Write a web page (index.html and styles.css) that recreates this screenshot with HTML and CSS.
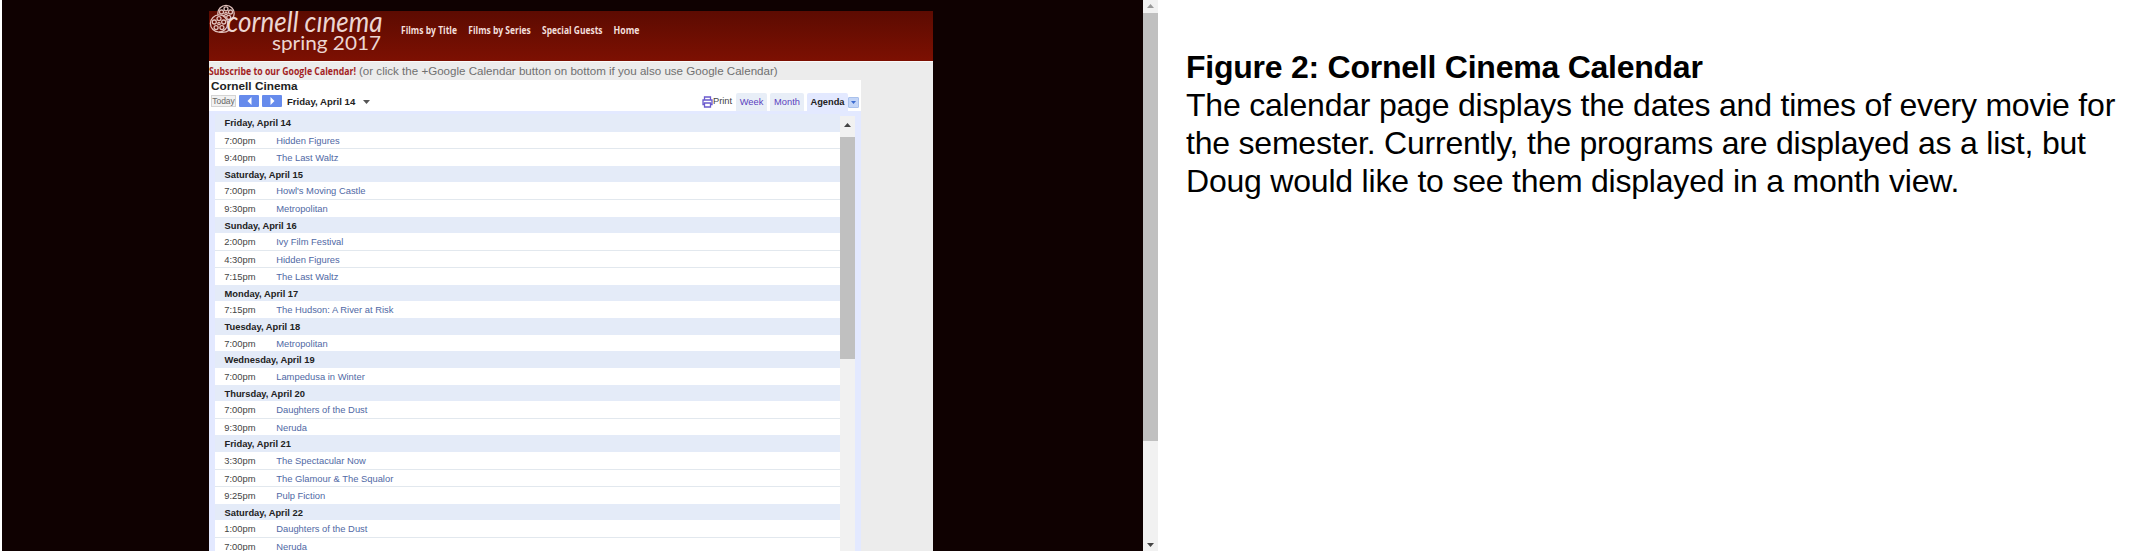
FILE: index.html
```html
<!DOCTYPE html>
<html lang="en">
<head>
<meta charset="utf-8">
<title>Cornell Cinema Calendar</title>
<link rel="stylesheet" href="styles.css">
</head>
<body>
<main class="figure">
  <section class="shot">
    <div class="site">
      <header class="banner">
        <svg class="logo" width="180" height="61" viewBox="0 0 180 61">
          <g fill="none" stroke="#e0bfba" stroke-width="1.300">
            <circle cx="17" cy="13.500" r="8.200"/><circle cx="17" cy="13.500" r="1.200"/>
            <circle cx="17" cy="8.800" r="2"/><circle cx="21.500" cy="12" r="2"/><circle cx="19.700" cy="17.400" r="2"/><circle cx="14.300" cy="17.400" r="2"/><circle cx="12.500" cy="12" r="2"/>
            <circle cx="10" cy="23.500" r="8.600" fill="#650b02"/><circle cx="10" cy="23.500" r="1.200"/>
            <circle cx="10" cy="18.600" r="2"/><circle cx="14.700" cy="22" r="2"/><circle cx="12.900" cy="27.600" r="2"/><circle cx="7.100" cy="27.600" r="2"/><circle cx="5.300" cy="22" r="2"/>
            <path d="M10 32.200q7 1 10-2"/>
          </g>
          <text class="logo-name" x="17.500" y="31.500" textLength="156" lengthAdjust="spacingAndGlyphs">cornell cınema</text>
          <text class="logo-term" x="63" y="50" textLength="109" lengthAdjust="spacingAndGlyphs">spring 2017</text>
        </svg>
        <svg class="nav" width="260" height="61" viewBox="0 0 260 61">
          <text x="12" y="34" textLength="56" lengthAdjust="spacingAndGlyphs">Films by Title</text>
          <text x="79.300" y="34" textLength="62.500" lengthAdjust="spacingAndGlyphs">Films by Series</text>
          <text x="153" y="34" textLength="60.500" lengthAdjust="spacingAndGlyphs">Special Guests</text>
          <text x="224.500" y="34" textLength="26" lengthAdjust="spacingAndGlyphs">Home</text>
        </svg>
      </header>
      <div class="subscribe">
        <svg width="150" height="18" viewBox="0 0 150 18"><text x="0" y="12.500" textLength="147" lengthAdjust="spacingAndGlyphs">Subscribe to our Google Calendar!</text></svg>
        <span>(or click the +Google Calendar button on bottom if you also use Google Calendar)</span>
      </div>
      <div class="calendar">
        <h2 class="cal-title">Cornell Cinema</h2>
        <div class="toolbar">
          <span class="today">Today</span>
          <span class="step"><svg width="5" height="8" viewBox="0 0 5 8"><path d="M4.500 0v8L.5 4z"/></svg></span>
          <span class="step"><svg width="5" height="8" viewBox="0 0 5 8"><path d="M.5 0v8l4-4z"/></svg></span>
          <span class="date">Friday, April 14</span>
          <svg class="caret" width="7" height="4" viewBox="0 0 7 4"><path d="M0 0h7L3.500 4z"/></svg>
          <svg class="printer" width="11" height="12" viewBox="0 0 11 12"><path d="M2.500 4V1h6v3M2.500 8.500H1V4h9v4.500H8.500M2.500 7h6v4h-6z"/></svg>
          <span class="print">Print</span>
          <span class="tab week">Week</span>
          <span class="tab month">Month</span>
          <span class="tab agenda">Agenda</span>
          <span class="menu"><svg width="5" height="3" viewBox="0 0 5 3"><path d="M0 0h5L2.500 3z"/></svg></span>
        </div>
        <div class="frame">
          <div class="list">
            <h3>Friday, April 14</h3>
            <p><time>7:00pm</time><a>Hidden Figures</a></p>
            <p><time>9:40pm</time><a>The Last Waltz</a></p>
            <h3>Saturday, April 15</h3>
            <p><time>7:00pm</time><a>Howl's Moving Castle</a></p>
            <p><time>9:30pm</time><a>Metropolitan</a></p>
            <h3>Sunday, April 16</h3>
            <p><time>2:00pm</time><a>Ivy Film Festival</a></p>
            <p><time>4:30pm</time><a>Hidden Figures</a></p>
            <p><time>7:15pm</time><a>The Last Waltz</a></p>
            <h3>Monday, April 17</h3>
            <p><time>7:15pm</time><a>The Hudson: A River at Risk</a></p>
            <h3>Tuesday, April 18</h3>
            <p><time>7:00pm</time><a>Metropolitan</a></p>
            <h3>Wednesday, April 19</h3>
            <p><time>7:00pm</time><a>Lampedusa in Winter</a></p>
            <h3>Thursday, April 20</h3>
            <p><time>7:00pm</time><a>Daughters of the Dust</a></p>
            <p><time>9:30pm</time><a>Neruda</a></p>
            <h3>Friday, April 21</h3>
            <p><time>3:30pm</time><a>The Spectacular Now</a></p>
            <p><time>7:00pm</time><a>The Glamour &amp; The Squalor</a></p>
            <p><time>9:25pm</time><a>Pulp Fiction</a></p>
            <h3>Saturday, April 22</h3>
            <p><time>1:00pm</time><a>Daughters of the Dust</a></p>
            <p><time>7:00pm</time><a>Neruda</a></p>
          </div>
          <div class="bar inner">
            <svg width="7" height="4" viewBox="0 0 7 4"><path d="M0 4h7L3.500 0z"/></svg>
            <div class="thumb"></div>
          </div>
        </div>
      </div>
    </div>
    <div class="bar outer">
      <svg class="dim" width="7" height="4" viewBox="0 0 7 4"><path d="M0 4h7L3.500 0z"/></svg>
      <div class="thumb"></div>
      <svg class="down" width="7" height="4" viewBox="0 0 7 4"><path d="M0 0h7L3.500 4z"/></svg>
    </div>
  </section>
  <section class="caption">
    <h1>Figure 2: Cornell Cinema Calendar</h1>
    <p>The calendar page displays the dates and times of every movie for<br>the semester. Currently, the programs are displayed as a list, but<br>Doug would like to see them displayed in a month view.</p>
  </section>
</main>
</body>
</html>
```
FILE: styles.css
```css
* { box-sizing: border-box; }
body { margin: 0; background: #fff; font-family: "Liberation Sans", Arial, sans-serif; overflow: hidden; }
h1, h2, h3, p { margin: 0; }
.figure { display: flex; width: 2154px; height: 552px; }

.shot { display: flex; justify-content: space-between; width: 1156px; height: 551px; margin-left: 2px; background: #0f0101; overflow: hidden; flex: none; }
.site { display: flex; flex-direction: column; width: 724px; margin-left: 207px; height: 551px; background: #ececec; }

.banner { display: flex; height: 61px; flex: none; background: linear-gradient(#0f0101 0 11px, #5c0b01 11px, #7d1002 61px); }
.logo { flex: none; width: 180px; }
.logo text { fill: #ecd6d2; font-family: Lato, sans-serif; }
.logo .logo-name { font-size: 28px; font-style: italic; }
.logo .logo-term { font-size: 20px; }
.nav text { fill: #f3dfdc; font: bold 11px "Open Sans", sans-serif; }

.subscribe { display: flex; height: 19px; flex: none; font-size: 11.590px; line-height: 18px; color: #707070; white-space: nowrap; border-top: 1px solid #fafafa; }
.subscribe svg { flex: none; }
.subscribe text { fill: #a31f24; font: bold 11px "Open Sans", sans-serif; }

.calendar { width: 652px; flex: 1; display: flex; flex-direction: column; background: #fff; overflow: hidden; }
.cal-title { height: 14px; padding-left: 2px; font-size: 11.800px; line-height: 13px; color: #222; }
.toolbar { display: flex; height: 18px; padding-left: 2px; flex: none; font-size: 9.300px; color: #222; white-space: nowrap; }
.today { width: 25px; height: 12px; margin: 2px 3px 0 0; border: 1px solid #d4d4d4; background: #f2f2f2; color: #666; font-size: 8.500px; line-height: 10px; text-align: center; }
.step { display: flex; align-items: center; justify-content: center; width: 20px; height: 12px; margin: 2px 3px 0 0; background: #668bec; border-radius: 1px; }
.step path { fill: #fff; }
.date { width: 78px; padding-left: 2px; line-height: 17px; font-weight: bold; font-size: 9.600px; }
.caret { margin-top: 7px; }
.caret path { fill: #555; }
.printer { margin: 3px 0 0 332px; }
.printer path { fill: none; stroke: #6a5acd; stroke-width: 1.300; }
.print { width: 23px; line-height: 17px; color: #444; }
.tab { height: 18px; line-height: 19px; text-align: center; border-radius: 2px 2px 0 0; background: #e8eef7; color: #5a42c0; }
.week { width: 31px; margin-right: 3px; }
.month { width: 34px; margin-right: 3px; }
.agenda { width: 41px; background: #e3e9ff; color: #222; font-weight: bold; }
.menu { display: flex; align-items: center; justify-content: center; width: 11px; height: 11px; margin-top: 4px; border: 1px solid #a9c1ec; background: #c3d5f7; border-radius: 1px; }
.menu path { fill: #3a6bd0; }

.frame { display: flex; flex: 1; padding: 3.400px 6px 0 6px; background: #e3e9ff; }
.list { flex: 1; font-size: 9.380px; }
.list h3 { height: 16.650px; padding-left: 9.500px; background: #e4ebf8; font-size: 9.350px; line-height: 18px; color: #222; }
.list p { display: flex; height: 16.650px; padding-left: 9.200px; background: #fff; line-height: 18px; }
.list h3:first-child { height: 17.200px; line-height: 19px; }
.list p + p { height: 17.500px; border-top: 1px solid #e2e8ee; }
.list time { width: 52px; color: #444; }
.list a { color: #5069a5; }

.bar { display: flex; flex-direction: column; align-items: center; background: #f1f1f1; flex: none; }
.bar path { fill: #444; }
.bar .thumb { width: 100%; background: #c0c0c0; }
.inner { width: 15px; margin-top: 2px; padding-top: 7px; }
.inner .thumb { height: 222px; margin-top: 10px; }
.outer { width: 15px; height: 551px; padding-top: 4px; }
.outer .thumb { height: 428px; margin-top: 5px; }
.outer .dim path { fill: #999; }
.outer .down { margin-top: 102px; }

.caption { padding: 48px 0 0 28px; font-size: 32px; line-height: 38px; letter-spacing: -.210px; color: #000; white-space: nowrap; }
.caption h1 { font-size: 32px; line-height: 38px; letter-spacing: -.240px; }
```
